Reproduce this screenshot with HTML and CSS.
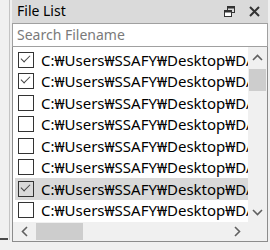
FILE: index.html
```html
<!DOCTYPE html>
<html lang="en">
<head>
  <meta charset="UTF-8" />
  <title>File List</title>
  <link rel="stylesheet" href="styles.css">
</head>
<body>

  <div class="app">
    <div class="side"></div>

    <div class="dock">
      <div class="dock-title">
        <span class="dock-name">File List</span>
        <span class="dock-buttons">
          <svg width="11" height="11" viewBox="0 0 11 11">
            <rect x="3.5" y="0.5" width="7" height="6" fill="none" stroke="#333" stroke-width="1"/>
            <rect x="3.5" y="0.5" width="7" height="2" fill="#333"/>
            <rect x="0.5" y="4.5" width="7" height="6" fill="#fff" stroke="#333" stroke-width="1"/>
            <rect x="0.5" y="4.5" width="7" height="2" fill="#333"/>
          </svg>
          <svg width="11" height="11" viewBox="0 0 11 11">
            <path d="M1 1 L10 10 M10 1 L1 10" stroke="#333" stroke-width="2"/>
          </svg>
        </span>
      </div>

      <input class="search" type="text" placeholder="Search Filename" />

      <div class="file-frame">
        <div class="file-rows">
          <div class="file-row"><span class="check on"></span><span class="path">C:₩Users₩SSAFY₩Desktop₩DATA₩scan_001.png</span></div>
          <div class="file-row"><span class="check on"></span><span class="path">C:₩Users₩SSAFY₩Desktop₩DATA₩scan_002.png</span></div>
          <div class="file-row"><span class="check"></span><span class="path">C:₩Users₩SSAFY₩Desktop₩DATA₩scan_003.png</span></div>
          <div class="file-row"><span class="check"></span><span class="path">C:₩Users₩SSAFY₩Desktop₩DATA₩scan_004.png</span></div>
          <div class="file-row"><span class="check"></span><span class="path">C:₩Users₩SSAFY₩Desktop₩DATA₩scan_005.png</span></div>
          <div class="file-row"><span class="check"></span><span class="path">C:₩Users₩SSAFY₩Desktop₩DATA₩scan_006.png</span></div>
          <div class="file-row selected"><span class="check on"></span><span class="path">C:₩Users₩SSAFY₩Desktop₩DATA₩scan_007.png</span></div>
          <div class="file-row"><span class="check"></span><span class="path">C:₩Users₩SSAFY₩Desktop₩DATA₩scan_008.png</span></div>
        </div>

        <div class="vscroll">
          <span class="arrow">
            <svg width="11" height="7" viewBox="0 0 11 7"><path d="M1 6 L5.5 1.5 L10 6" fill="none" stroke="#606060" stroke-width="1.6"/></svg>
          </span>
          <span class="vthumb"></span>
          <span class="arrow down">
            <svg width="11" height="7" viewBox="0 0 11 7"><path d="M1 1 L5.5 5.5 L10 1" fill="none" stroke="#606060" stroke-width="1.6"/></svg>
          </span>
        </div>

        <div class="hscroll">
          <span class="arrow">
            <svg width="7" height="11" viewBox="0 0 7 11"><path d="M6 1 L1.5 5.5 L6 10" fill="none" stroke="#606060" stroke-width="1.6"/></svg>
          </span>
          <span class="hthumb"></span>
          <span class="arrow right">
            <svg width="7" height="11" viewBox="0 0 7 11"><path d="M1 1 L5.5 5.5 L1 10" fill="none" stroke="#606060" stroke-width="1.6"/></svg>
          </span>
        </div>

        <div class="corner"></div>
      </div>
    </div>
  </div>

</body>
</html>
```

FILE: styles.css
```css
body {
  margin: 0;
  background: #f0f0f0;
  font-family: 'Noto Sans', 'Open Sans', sans-serif;
  color: #000;
}

.app {
  display: flex;
  height: 250px;
}

.side {
  width: 9px;
  height: 240px;
  border-right: 1px solid #c4c4c4;
  margin-right: 1px;
  position: relative;
}

.side::after {
  content: '';
  position: absolute;
  left: 0;
  bottom: 0;
  width: 8px;
  height: 2px;
  background: #4a4a4a;
}

.dock {
  width: 256px;
  margin-left: 1px;
  display: flex;
  flex-direction: column;
}

.dock-title {
  height: 23px;
  background: #dadada;
  display: flex;
  align-items: center;
  justify-content: space-between;
  padding: 0 8px 0 5px;
}

.dock-name {
  font-size: 14px;
  margin-top: -2px;
}

.dock-buttons {
  display: flex;
  gap: 14px;
  align-items: center;
}

.search {
  box-sizing: border-box;
  height: 24px;
  width: 100%;
  margin: 0;
  border: 1px solid #a0a0a0;
  padding: 0 4px 2px;
  font-family: inherit;
  font-size: 14px;
  background: #fff;
  outline: none;
}

.search::placeholder {
  color: #7a7a7a;
}

.file-frame {
  border: 1px solid #8c8c8c;
  border-top: none;
  background: #fff;
  display: grid;
  grid-template-columns: 235px 19px;
  grid-template-rows: 175px 19px;
}

.file-rows {
  padding: 2px 0 0 2px;
  overflow: hidden;
}

.file-row {
  height: 21.5px;
  display: flex;
  align-items: center;
  gap: 7px;
  padding-left: 3px;
  white-space: nowrap;
  overflow: hidden;
}

.file-row.selected {
  background: #d9d9d9;
}

.check {
  flex: none;
  width: 14px;
  height: 14px;
  border: 1px solid #333;
  position: relative;
}

.check.on::after {
  content: '';
  position: absolute;
  left: 4px;
  top: 0px;
  width: 4px;
  height: 8px;
  border-right: 1.5px solid #444;
  border-bottom: 1.5px solid #444;
  transform: rotate(45deg);
  transform-origin: center;
}

.path {
  font-size: 15px;
  overflow: hidden;
}

.vscroll {
  background: #f0f0f0;
  display: flex;
  flex-direction: column;
  align-items: center;
}

.vscroll .arrow {
  height: 20px;
  display: flex;
  align-items: center;
  justify-content: center;
  width: 100%;
}

.vscroll .arrow.down {
  margin-top: auto;
}

.vthumb {
  width: 17px;
  height: 22px;
  margin-top: 2px;
  background: #cdcdcd;
}

.hscroll {
  background: #f0f0f0;
  display: flex;
  align-items: center;
}

.hscroll .arrow {
  width: 22px;
  height: 100%;
  display: flex;
  align-items: center;
  justify-content: center;
}

.hscroll .arrow.right {
  margin-left: auto;
}

.hthumb {
  width: 47px;
  height: 17px;
  margin-left: 1px;
  background: #cdcdcd;
}

.corner {
  background: #f0f0f0;
}
```
